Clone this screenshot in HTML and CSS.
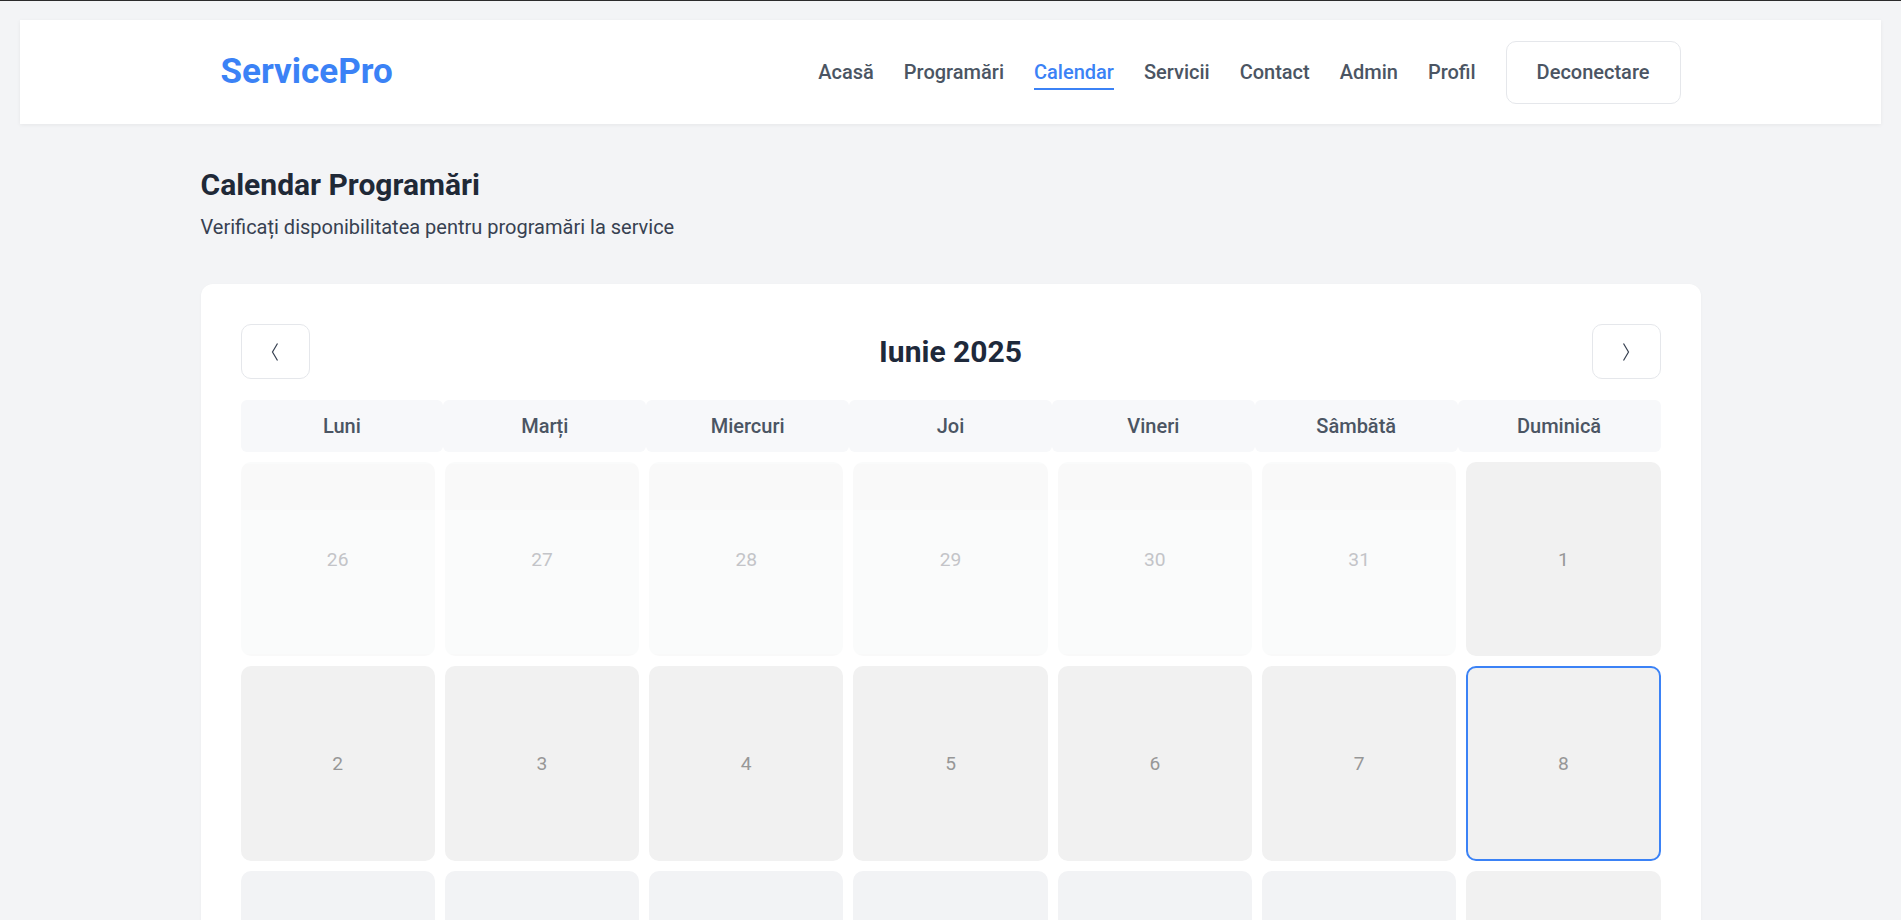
FILE: index.html
```html
<!DOCTYPE html>
<html lang="ro">
<head>
<meta charset="utf-8">
<title>ServicePro - Calendar</title>
<link rel="stylesheet" href="styles.css">
</head>
<body>
<header class="site-header">
  <div class="header-inner">
    <a class="logo" href="#">ServicePro</a>
    <nav class="nav">
      <a class="nav-link" href="#">Acasă</a>
      <a class="nav-link" href="#">Programări</a>
      <a class="nav-link active" href="#">Calendar</a>
      <a class="nav-link" href="#">Servicii</a>
      <a class="nav-link" href="#">Contact</a>
      <a class="nav-link" href="#">Admin</a>
      <a class="nav-link" href="#">Profil</a>
      <button class="logout" type="button">Deconectare</button>
    </nav>
  </div>
</header>

<main class="page">
  <h1 class="page-title">Calendar Programări</h1>
  <p class="page-subtitle">Verificați disponibilitatea pentru programări la service</p>

  <section class="calendar-card">
    <div class="cal-head">
      <button class="month-btn" type="button" aria-label="Luna anterioară">
        <svg width="8" height="18" viewBox="0 0 8 18"><polyline points="6.5,0.5 1.5,9 6.5,17.5" fill="none" stroke="#374151" stroke-width="1.2"/></svg>
      </button>
      <h2 class="month-title">Iunie 2025</h2>
      <button class="month-btn" type="button" aria-label="Luna următoare">
        <svg width="8" height="18" viewBox="0 0 8 18"><polyline points="1.5,0.5 6.5,9 1.5,17.5" fill="none" stroke="#374151" stroke-width="1.2"/></svg>
      </button>
    </div>

    <div class="weekdays">
      <div class="weekday">Luni</div>
      <div class="weekday">Marți</div>
      <div class="weekday">Miercuri</div>
      <div class="weekday">Joi</div>
      <div class="weekday">Vineri</div>
      <div class="weekday">Sâmbătă</div>
      <div class="weekday">Duminică</div>
    </div>

    <div class="days">
      <div class="day other">26</div>
      <div class="day other">27</div>
      <div class="day other">28</div>
      <div class="day other">29</div>
      <div class="day other">30</div>
      <div class="day other">31</div>
      <div class="day past">1</div>

      <div class="day past">2</div>
      <div class="day past">3</div>
      <div class="day past">4</div>
      <div class="day past">5</div>
      <div class="day past">6</div>
      <div class="day past">7</div>
      <div class="day past today">8</div>

      <div class="day open">9</div>
      <div class="day open">10</div>
      <div class="day open">11</div>
      <div class="day open">12</div>
      <div class="day open">13</div>
      <div class="day open">14</div>
      <div class="day past">15</div>

      <div class="day open">16</div>
      <div class="day open">17</div>
      <div class="day open">18</div>
      <div class="day open">19</div>
      <div class="day open">20</div>
      <div class="day open">21</div>
      <div class="day past">22</div>
    </div>
  </section>
</main>
</body>
</html>
```

FILE: styles.css
```css
* {
  box-sizing: border-box;
}

html {
  border-top: 1px solid #2b2b2b;
  overflow: hidden;
}

body {
  margin: 0;
  background: #f3f4f6;
  font-family: "Roboto", "Noto Sans", sans-serif;
  color: #1f2937;
}

.site-header {
  margin: 19px 20px 0;
  background: #ffffff;
  box-shadow: 0 1px 4px rgba(0, 0, 0, 0.06);
}

.header-inner {
  max-width: 1500px;
  margin: 0 auto;
  padding: 0 20px;
  height: 104px;
  display: flex;
  align-items: center;
  justify-content: space-between;
}

.logo {
  font-size: 35px;
  font-weight: 700;
  color: #3b82f6;
  text-decoration: none;
  line-height: 1.2;
}

.nav {
  display: flex;
  align-items: center;
  gap: 30px;
}

.nav-link {
  font-size: 20px;
  font-weight: 500;
  line-height: 24px;
  color: #4b5563;
  text-decoration: none;
  padding: 4px 0;
  border-top: 2px solid transparent;
  border-bottom: 2px solid transparent;
}

.nav-link.active {
  color: #3b82f6;
  border-bottom-color: #3b82f6;
}

.logout {
  height: 63px;
  padding: 0 30px;
  background: #ffffff;
  border: 1px solid #e5e7eb;
  border-radius: 10px;
  font-family: inherit;
  font-size: 20px;
  font-weight: 500;
  color: #4b5563;
}

.page {
  max-width: 1500px;
  margin: 0 auto;
  padding-top: 43px;
}

.page-title {
  margin: 0;
  font-size: 30px;
  line-height: 1.2;
  font-weight: 700;
  color: #1f2937;
}

.page-subtitle {
  margin: 9px 0 0;
  font-size: 20px;
  line-height: 30px;
  color: #374151;
}

.calendar-card {
  margin-top: 42px;
  background: #ffffff;
  border-radius: 12px;
  padding: 40px;
  box-shadow: 0 1px 3px rgba(0, 0, 0, 0.04);
}

.cal-head {
  display: flex;
  align-items: center;
  justify-content: space-between;
  margin-bottom: 21px;
}

.month-btn {
  width: 69px;
  height: 55px;
  background: #ffffff;
  border: 1px solid #e5e7eb;
  border-radius: 10px;
  display: flex;
  align-items: center;
  justify-content: center;
  padding: 0;
}

.month-title {
  margin: 0;
  font-size: 30px;
  line-height: 1.2;
  font-weight: 700;
  color: #1e293b;
}

.weekdays {
  display: grid;
  grid-template-columns: repeat(7, 1fr);
}

.weekday {
  height: 52px;
  display: flex;
  align-items: center;
  justify-content: center;
  background: #f7f8fa;
  border-radius: 6px;
  font-size: 20px;
  font-weight: 500;
  color: #4b5563;
}

.days {
  margin-top: 10px;
  display: grid;
  grid-template-columns: repeat(7, 1fr);
  gap: 10px;
}

.day {
  aspect-ratio: 1 / 1;
  border-radius: 10px;
  display: flex;
  align-items: center;
  justify-content: center;
  font-size: 19.2px;
  border: 2px solid transparent;
}

.day.other {
  background: linear-gradient(#f9f9f9 0, #f9f9f9 46px, #fafbfb 46px);
  color: #c3c4c8;
}

.day.past {
  background: #f1f1f1;
  color: #979797;
}

.day.open {
  background: #f2f3f5;
  color: #4b5563;
}

.day.today {
  border-color: #3b82f6;
}
```
